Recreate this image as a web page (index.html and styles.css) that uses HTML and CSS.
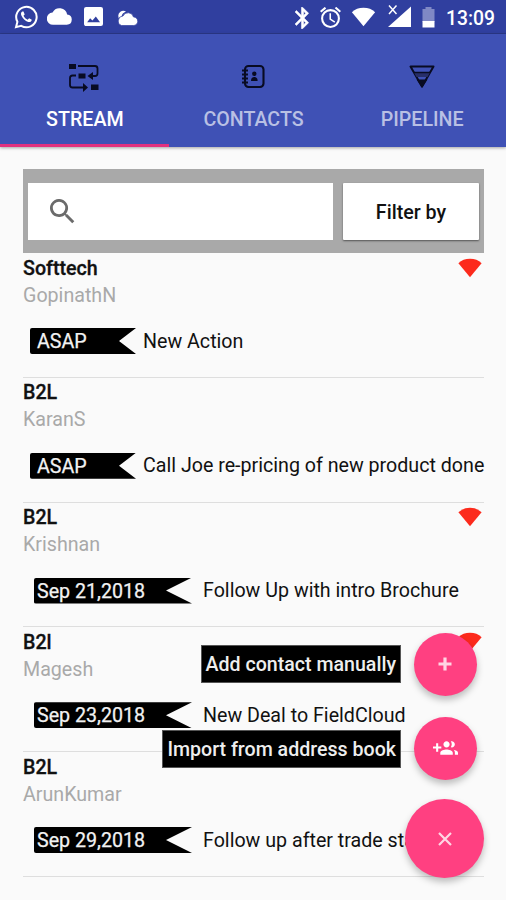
FILE: index.html
```html
<!DOCTYPE html>
<html lang="en">
<head>
<meta charset="utf-8">
<title>Stream</title>
<link rel="stylesheet" href="styles.css">
</head>
<body>
<svg width="0" height="0" class="defs">
  <symbol id="fan" viewBox="0 0 24 20"><path d="M.4 5.2Q5 .8 12 .8T23.600 5.200L12 19.200Z"/></symbol>
</svg>
<header class="status">
  <svg class="s-wa" viewBox="0 0 24 24"><path d="M2 22.200l1.400-5.400A10.200 10.200 0 1 1 7.200 20.800z" fill="none" stroke="#fff" stroke-width="2"/><path d="M8.300 6.500c-1.500.8-1.600 2.500-.8 4.200 1.300 2.900 3.600 5.200 6.700 6.200 1.800.6 3.300-.3 3.600-2.200l-2.700-1.500-1.400 1.500c-1.900-.7-3.300-2-4.200-3.900l1.200-1.400-1.200-2.900z" fill="#fff"/></svg>
  <svg class="s-cloud" viewBox="0 4 24 16"><path d="M19.350 10.040A7.490 7.490 0 0 0 5.350 8.040 5.990 5.990 0 0 0 6 20h13a5 5 0 0 0 .35-9.960z" fill="#fff"/></svg>
  <svg class="s-img" viewBox="3 3 18 18"><path d="M21 19V5a2 2 0 0 0-2-2H5a2 2 0 0 0-2 2v14c0 1.100.9 2 2 2h14a2 2 0 0 0 2-2zM6 17.500l2.800-3.800 2.200 2 3.200-3.700 4 5.500z" fill="#fff" fill-rule="evenodd"/></svg>
  <svg class="s-weather" viewBox="0 0 21 16"><path d="M2 7A5 5 0 0 1 9.500 1.500Q5.500 3 5 6.500L2 8z" fill="#fff"/><path d="M17 7A5.600 5.600 0 0 0 6.500 6 4.900 4.900 0 0 0 5 15.500H17A4.200 4.200 0 0 0 17 7z" fill="#fff" stroke="#303f9f" stroke-width=".7"/></svg>
  <span class="grow"></span>
  <svg class="s-bt" viewBox="5 2 13 20"><path d="M17.700 7.700L12 2h-1v7.600L6.400 5 5 6.400l5.600 5.600L5 17.600 6.400 19l4.600-4.600V22h1l5.700-5.700-4.300-4.300zM13 5.800l1.900 1.900L13 9.600zm1.900 10.500L13 18.200v-3.800z" fill="#fff" stroke="#fff" stroke-width=".5"/></svg>
  <svg class="s-alarm" viewBox="2 2 20 20"><path d="M22 5.700l-4.600-3.900-1.300 1.500 4.600 3.900zM7.900 3.400L6.600 1.900 2 5.700l1.300 1.500zM12.500 8H11v6l4.700 2.900.8-1.200-4-2.400zM12 4a9 9 0 1 0 0 18 9 9 0 0 0 0-18zm0 16a7 7 0 1 1 0-14 7 7 0 0 1 0 14z" fill="#fff"/></svg>
  <svg class="s-wifi" fill="#fff"><use href="#fan"/></svg>
  <svg class="s-cell" viewBox="0 0 23 23"><path d="M23 1.500V22H0z" fill="#fff"/><path d="M1 0l8.500 10M9.500 0L1 10" stroke="#303f9f" stroke-width="4"/><path d="M1 .5l7.500 8.500M8.500 .5L1 9" stroke="#fff" stroke-width="1.500"/></svg>
  <svg class="s-bat" viewBox="0 0 12 21"><path d="M0 2h3V0h6v2h3v13H0z" fill="#8089c5"/><path d="M0 14h12v6.500H0z" fill="#fff"/></svg>
  <span class="clock">13:09</span>
</header>
<nav class="tabs">
  <div class="tab active">
    <svg viewBox="0 0 32 30"><g fill="#080b22"><path d="M1 2h7v5H1zM10.500 11.500h7v5h-7zM23 22.500h7.500V28H23zM19.500 14l5.500-4v8zM20 25.500l-5-4.500v9z"/></g><path d="M10 4h17q2.500 0 2.500 2.500v5q0 2.500-2.500 2.500h-3M8 13.500H4.500Q2 13.500 2 16v7q0 2.500 2.500 2.500H17" fill="none" stroke="#080b22" stroke-width="1.800"/></svg>
    <span>STREAM</span>
  </div>
  <div class="tab">
    <svg viewBox="0 0 32 30"><rect x="8" y="4" width="18.500" height="21" rx="3.500" fill="none" stroke="#080b22" stroke-width="2.100"/><path d="M5 8.500h6M5 12.500h6M5 16.500h6M5 20.500h6" stroke="#080b22" stroke-width="2"/><circle cx="17.300" cy="11.800" r="2.200" fill="#080b22"/><path d="M14 19c0-3 1.300-4 3.300-4s3.300 1 3.300 4z" fill="#080b22"/></svg>
    <span>CONTACTS</span>
  </div>
  <div class="tab">
    <svg viewBox="0 0 32 30"><path d="M4.500 4.500h23L16 24.500z" fill="none" stroke="#080b22" stroke-width="2" stroke-linejoin="round"/><path d="M8 10.500h16l-2.500 4.500h-11z" fill="#272e68"/><path d="M8 10.500h16" stroke="#080b22" stroke-width="1.500"/><path d="M10.500 17.500h11L16 26z" fill="#080b22"/></svg>
    <span>PIPELINE</span>
  </div>
</nav>
<main>
  <div class="search">
    <div class="field"><svg viewBox="3 3 18 18"><path d="M15.500 14h-.79l-.28-.27A6.500 6.500 0 1 0 13.730 14.430l.27.28v.79l5 4.990L20.490 19zm-6 0a4.500 4.500 0 1 1 0-9 4.500 4.500 0 0 1 0 9z"/></svg></div>
    <div class="filter">Filter by</div>
  </div>
  <section class="item">
    <div class="name"><span>Softtech</span><svg class="flag"><use href="#fan"/></svg></div>
    <div class="person">GopinathN</div>
    <div class="action"><span class="tag">ASAP</span><span class="task">New Action</span></div>
  </section>
  <section class="item">
    <div class="name">B2L</div>
    <div class="person">KaranS</div>
    <div class="action"><span class="tag">ASAP</span><span class="task">Call Joe re-pricing of new product done</span></div>
  </section>
  <section class="item">
    <div class="name"><span>B2L</span><svg class="flag"><use href="#fan"/></svg></div>
    <div class="person">Krishnan</div>
    <div class="action"><span class="tag date">Sep 21,2018</span><span class="task">Follow Up with intro Brochure</span></div>
  </section>
  <section class="item">
    <div class="name"><span>B2l</span><svg class="flag"><use href="#fan"/></svg></div>
    <div class="person">Magesh</div>
    <div class="action"><span class="tag date">Sep 23,2018</span><span class="task">New Deal to FieldCloud</span></div>
  </section>
  <section class="item">
    <div class="name">B2L</div>
    <div class="person">ArunKumar</div>
    <div class="action"><span class="tag date">Sep 29,2018</span><span class="task">Follow up after trade sta</span></div>
  </section>
</main>
<aside class="dial">
  <div class="option"><span class="label">Add contact manually</span><span class="fab"><svg viewBox="0 0 32 32"><path d="M16 9.500v13M9.500 16h13" stroke="#ffd5e3" stroke-width="3.200"/></svg></span></div>
  <div class="option"><span class="label">Import from address book</span><span class="fab"><svg viewBox="0 0 24 24"><path d="M8 10H5V7H3v3H0v2h3v3h2v-3h3zm10 1c1.660 0 2.990-1.340 2.990-3S19.660 5 18 5c-.32 0-.63.05-.91.14.57.81.9 1.790.9 2.860s-.34 2.040-.9 2.860c.28.090.59.14.91.14zm-5 0c1.660 0 2.990-1.340 2.990-3S14.660 5 13 5s-3 1.340-3 3 1.340 3 3 3zm6.620 2.160c.83.730 1.380 1.660 1.380 2.840v2h3v-2c0-1.540-2.370-2.490-4.380-2.840zM13 13c-2 0-6 1-6 3v2h12v-2c0-2-4-3-6-3z" fill="#fff"/></svg></span></div>
  <div class="fab main"><svg viewBox="0 0 32 32"><path d="M10 10l12 12M22 10L10 22" stroke="#ffd5e3" stroke-width="2.200"/></svg></div>
</aside>
</body>
</html>
```

FILE: styles.css
```css
* { box-sizing: border-box; }
body {
  margin: 0;
  width: 506px;
  height: 900px;
  overflow: hidden;
  position: relative;
  background: #fafafa;
  color: #111;
  font: 400 19.650px Roboto, sans-serif;
}
svg { display: block; flex: none; }
.defs { position: absolute; }

.status {
  display: flex;
  align-items: center;
  height: 34px;
  padding: 0 11px 0 14px;
  background: #303f9f;
  border-bottom: 1px solid #2b3889;
}
.grow { flex: 1; }
.s-wa { width: 24px; height: 24px; margin-right: 9px; }
.s-cloud { width: 25px; height: 17px; margin-right: 12px; }
.s-img { width: 19px; height: 19px; margin-right: 13px; }
.s-weather { width: 22px; height: 16px; margin-top: 2px; }
.s-bt { width: 14px; height: 22px; margin: 2px 11px 0 0; }
.s-alarm { width: 21px; height: 21px; margin: 2px 10px 0 0; }
.s-wifi { width: 25px; height: 20px; margin-right: 12px; }
.s-cell { width: 23px; height: 23px; margin-right: 11px; }
.s-bat { width: 13px; height: 21px; margin: 2px 11px 0 0; }
.clock { color: #fff; font-weight: 500; font-size: 19.300px; padding-top: 3px; }

.tabs {
  display: flex;
  height: 112.500px;
  background: #3f51b5;
  box-shadow: 0 1px 3px rgba(0, 0, 0, .35);
}
.tab {
  flex: 1;
  display: flex;
  flex-direction: column;
  align-items: center;
  padding-top: 28px;
  color: #b9c0e4;
  font-weight: 500;
  border-bottom: 3.500px solid transparent;
}
.tab svg { width: 32px; height: 30px; }
.tab span { line-height: 24px; margin-top: 16px; padding-left: 1px; }
.tab.active { color: #fff; border-bottom-color: #e2317f; }

main { padding: 22.500px 22px 0 23px; }
.search {
  display: flex;
  gap: 10px;
  height: 84px;
  padding: 14px 5px 13px;
  background: #a9a9a9;
}
.field { flex: 1; display: flex; align-items: center; padding-left: 22px; background: #fff; }
.field svg { width: 25px; height: 25px; margin-top: -1px; fill: #6b6b6b; }
.filter {
  width: 136px;
  line-height: 59px;
  text-align: center;
  font-weight: 500;
  background: #fff;
  border-radius: 1px;
  box-shadow: 0 1px 2px rgba(0, 0, 0, .5);
}
.item { height: 124.750px; border-bottom: 1.500px solid #dedede; padding-top: 1.500px; }
.name { display: flex; justify-content: space-between; line-height: 27px; font-weight: 500; -webkit-text-stroke: .3px #111; }
.flag { width: 24px; height: 20px; margin: 3px 2px 0 0; fill: #fc2a1c; }
.person { line-height: 27px; color: #a9a9a9; }
.action { display: flex; align-items: center; height: 26px; margin-top: 19.500px; padding-left: 7px; white-space: nowrap; }
.task { line-height: 26px; padding-top: 1px; }
.tag {
  flex: none;
  width: 106px;
  margin-right: 7px;
  padding-left: 7px;
  line-height: 28px;
  height: 26px;
  background: #000;
  color: #f2f2f2;
  -webkit-text-stroke: .25px #f2f2f2;
  border-radius: 2px 0 0 2px;
  clip-path: polygon(0 0, 100% 0, calc(100% - 17px) 50%, 100% 100%, 0 100%);
}
.tag.date {
  width: 158px;
  margin: 0 11px 0 4px;
  padding-left: 3px;
  clip-path: polygon(0 0, 100% 0, calc(100% - 26px) 50%, 100% 100%, 0 100%);
}

.dial {
  position: absolute;
  right: 22px;
  top: 632.500px;
  display: flex;
  flex-direction: column;
  align-items: flex-end;
}
.option { display: flex; align-items: center; gap: 12.500px; margin: 0 7.500px 21.500px 0; }
.label {
  height: 38px;
  padding: 0 4px;
  line-height: 37px;
  font-size: 19.600px;
  font-weight: 500;
  background: #000;
  color: #eee;
  border: 1px solid #555;
  white-space: nowrap;
}
.fab {
  display: flex;
  align-items: center;
  justify-content: center;
  width: 63px;
  height: 63px;
  border-radius: 50%;
  background: #ff4081;
  box-shadow: 0 4px 7px rgba(0, 0, 0, .25);
}
.fab svg { width: 32px; height: 32px; }
.option:nth-child(2) svg { width: 25px; height: 25px; }
.option:nth-child(2) { margin-bottom: 19px; }
.fab.main { width: 79px; height: 79px; }
```
